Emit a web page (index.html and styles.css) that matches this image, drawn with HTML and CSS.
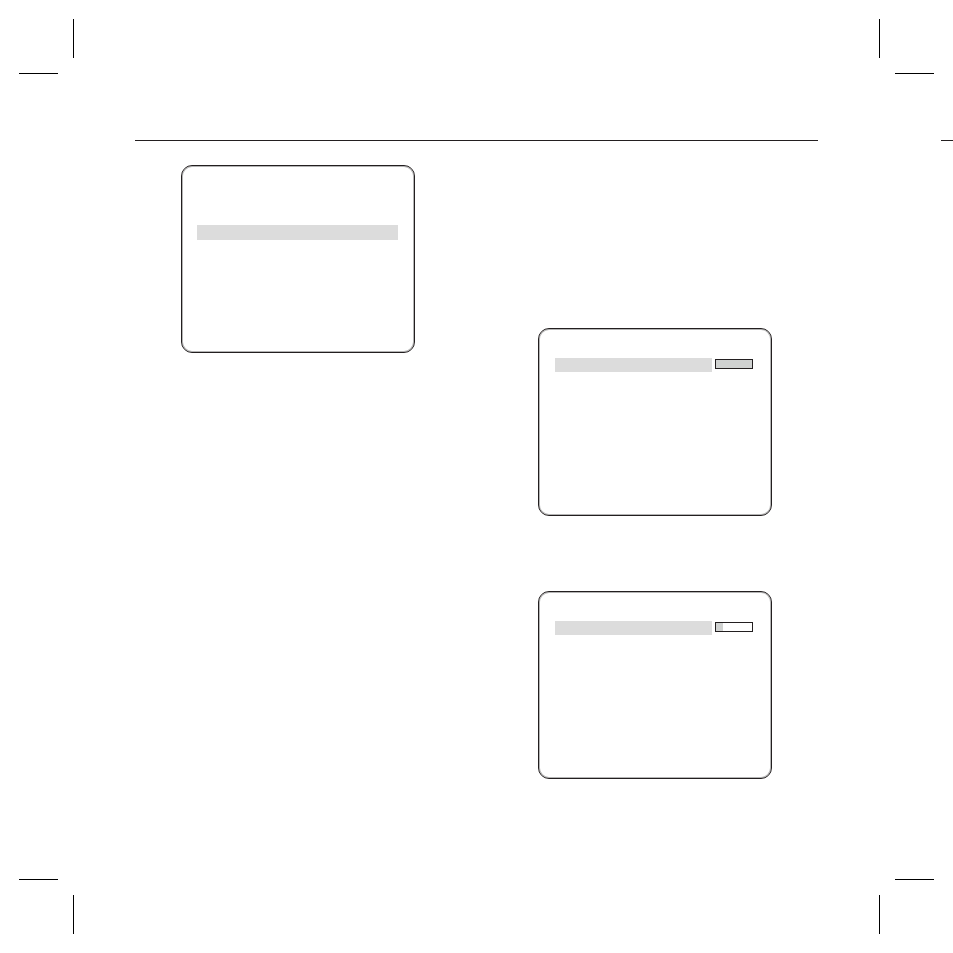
FILE: index.html
```html
<!DOCTYPE html>
<html lang="en">
<head>
    <meta charset="UTF-8">
    <meta name="viewport" content="width=device-width, initial-scale=1">
    <title>Manual Page</title>
    <link rel="stylesheet" href="styles.css">
</head>
<body>
    <div class="sheet">
        <div class="crop-row" aria-hidden="true">
            <svg class="crop" viewBox="0 0 55 55"><path d="M54.5 0v39M0 54.5h39"/></svg>
            <svg class="crop" viewBox="0 0 55 55"><path d="M.5 0v39M16 54.5h39"/></svg>
        </div>

        <header class="page-head">
            <hr class="rule">
            <hr class="rule-next">
        </header>

        <main class="columns">
            <section class="column">
                <div class="screen screen-menu">
                    <div class="row">
                        <div class="highlight"></div>
                    </div>
                </div>
            </section>

            <section class="column column-right">
                <div class="screen">
                    <div class="row">
                        <div class="highlight"></div>
                        <div class="level"><div class="level-fill" style="width: 100%"></div></div>
                    </div>
                </div>
                <div class="screen">
                    <div class="row">
                        <div class="highlight"></div>
                        <div class="level"><div class="level-fill" style="width: 20%"></div></div>
                    </div>
                </div>
            </section>
        </main>

        <div class="crop-row" aria-hidden="true">
            <svg class="crop" viewBox="0 0 55 55"><path d="M54.5 16v39M0 .5h39"/></svg>
            <svg class="crop" viewBox="0 0 55 55"><path d="M.5 16v39M16 .5h39"/></svg>
        </div>
    </div>
</body>
</html>
```
FILE: styles.css
```css
* { box-sizing: border-box; }

body {
    margin: 0;
    background-color: #fff;
    font-family: "Liberation Sans", Arial, sans-serif;
}

.sheet {
    display: flex;
    flex-direction: column;
    min-height: 100vh;
    padding: 19px 0;
}

/* Printer crop marks */
.crop-row {
    display: flex;
    justify-content: space-between;
    padding: 0 19px;
}

.crop {
    display: block;
    width: 55px;
    height: 55px;
    fill: none;
    stroke: #000;
}

.page-head {
    display: flex;
    padding: 66px 0 24px 135px;
}

.page-head hr {
    height: 1px;
    margin: 0;
    border: 0;
    background-color: #231f20;
}

.rule { flex: 1; }

.page-head .rule-next {
    width: 12px;
    margin-left: 123px;
}

.columns {
    display: grid;
    grid-template-columns: 1fr 1fr;
    gap: 31px;
    flex: 1;
    padding: 0 135px;
}

.column { padding: 0 46px; }

.column-right {
    display: flex;
    flex-direction: column;
    gap: 75px;
    padding-top: 163px;
}

/* On-screen menu frames */
.screen {
    min-height: 188px;
    padding: 29px 18px 29px 16px;
    border: 1px solid #231f20;
    border-radius: 11px;
    box-shadow: inset 0 0 0 1px #b4b4b4;
}

.screen-menu { padding: 59px 16px 29px 15px; }

.row {
    display: flex;
    gap: 3px;
}

.highlight {
    flex: 1;
    height: 14px;
    background-color: #dcdcdc;
}

.screen-menu .highlight { height: 15px; }

.level {
    width: 38px;
    height: 10px;
    margin-top: 1px;
    border: 1px solid #231f20;
}

.level-fill {
    height: 100%;
    background-color: #d0d2d1;
}
```
